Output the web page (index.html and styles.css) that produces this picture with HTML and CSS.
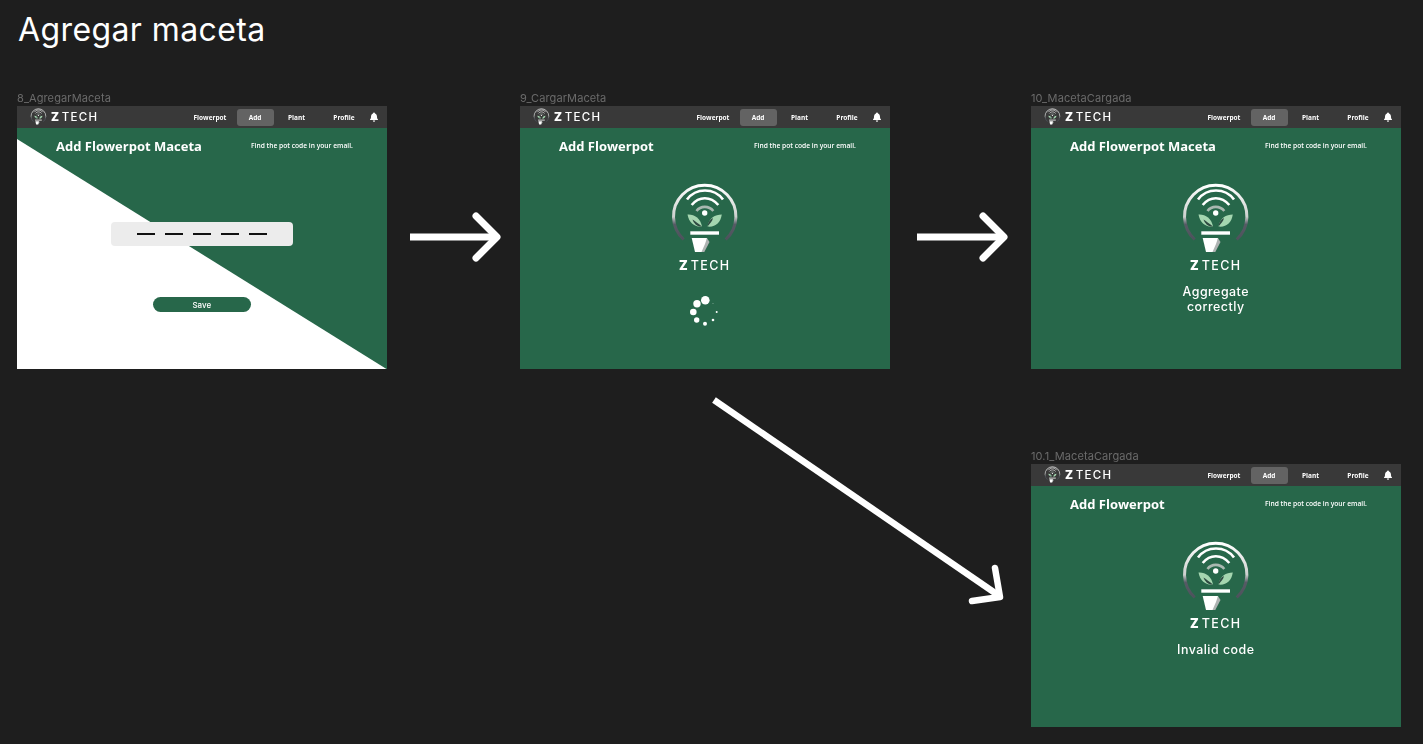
FILE: index.html
```html
<!DOCTYPE html>
<html lang="en">

<head>
    <meta charset="UTF-8">
    <meta name="viewport" content="width=device-width, initial-scale=1.0">
    <title>Agregar maceta</title>

    <link rel="stylesheet" href="styles.css">
</head>

<body>
    <!-- Shared logo mark -->
    <svg class="defs" aria-hidden="true">
        <defs>
            <linearGradient id="ring" x1="0" y1="0" x2="0" y2="1">
                <stop offset="0" stop-color="#ffffff" />
                <stop offset="0.58" stop-color="#ccd0ce" />
                <stop offset="0.72" stop-color="#565b65" />
                <stop offset="1" stop-color="#4d525c" />
            </linearGradient>
            <symbol id="mark" viewBox="0 0 72 78">
                <path d="M14.700 57.500A31.200 31.200 0 1 1 56.700 57.500" fill="none" stroke="url(#ring)" stroke-width="3" />
                <path d="M18 17.500C27 5.500 45 5.500 54 17.500" fill="none" stroke="#fff" stroke-width="2.600" />
                <path d="M22.700 23C30 14 41.500 14 49.300 23" fill="none" stroke="#fff" stroke-width="2.600" />
                <path d="M27.500 29C31.500 23.500 40 23.500 44.300 29" fill="none" stroke="#a9b8b0" stroke-width="2.600" />
                <circle cx="35.700" cy="31" r="2.700" fill="#fff" />
                <path d="M18.500 32.500C25 32 31.500 36 33 44.500C26 45.500 20 41 18.500 32.500Z" fill="#a5d6b0" />
                <path d="M23.500 37.500C26 39 29 41.500 33 44.500C28 45 25 41.500 23.500 37.500Z" fill="#2f4a42" />
                <path d="M52.800 32.500C46 32.500 40 36 38.500 44.500C46 45.500 51.500 41 52.800 32.500Z" fill="#a5d6b0" />
                <path d="M38.500 44.500C41 41.500 43.500 39 44 36C41 37.500 39 40 38.500 44.500Z" fill="#2f4a42" />
                <rect x="21.300" y="49.300" width="28.700" height="3.400" fill="#fff" />
                <path d="M38 56L40.500 60L35.300 70H31L35.500 60Z" fill="#aeb3b2" />
                <path d="M22.700 56H38L36 62L32.500 70H26Z" fill="#fff" />
            </symbol>
        </defs>
    </svg>

    <h1 class="page-title">Agregar maceta</h1>

    <!-- Arrows between the frames -->
    <svg class="arrows" width="1423" height="744" viewBox="0 0 1423 744" aria-hidden="true">
        <g fill="none" stroke="#fff" stroke-linecap="round" stroke-linejoin="round">
            <path d="M410 237H496" stroke-width="7" stroke-linecap="butt" />
            <path d="M476 216L497 237L476 258" stroke-width="7" />
            <path d="M917 237H1003" stroke-width="7" stroke-linecap="butt" />
            <path d="M983 216L1004 237L983 258" stroke-width="7" />
            <path d="M714 400L998 595" stroke-width="6.500" stroke-linecap="butt" />
            <path d="M995 568L1000 597L972 601" stroke-width="6.500" />
        </g>
    </svg>

    <!-- 8_AgregarMaceta -->
    <section class="frame frame-add">
        <p class="frame-label">8_AgregarMaceta</p>
        <nav class="nav">
            <span class="logo"><svg class="logo-mark"><use href="#mark" /></svg><span class="brand"><b>Z</b>TECH</span></span>
            <div class="nav-links">
                <a>Flowerpot</a>
                <a class="active">Add</a>
                <a>Plant</a>
                <a>Profile</a>
                <svg class="bell" viewBox="0 0 10 10"><path d="M5 .6a1 1 0 0 1 1 .9C7.400 2 8 3.200 8 4.700c0 1.400.4 2.200 1 2.800v.6H1v-.6c.6-.6 1-1.400 1-2.800C2 3.200 2.600 2 4 1.500a1 1 0 0 1 1-.9ZM3.800 8.600h2.400a1.200 1.200 0 0 1-2.400 0Z" fill="#fff" /></svg>
            </div>
        </nav>
        <div class="frame-body with-wedge">
            <div class="head">
                <h2>Add Flowerpot Maceta</h2>
                <p>Find the pot code in your email.</p>
            </div>
            <div class="code-input">
                <span></span><span></span><span></span><span></span><span></span>
            </div>
            <button class="save">Save</button>
        </div>
    </section>

    <!-- 9_CargarMaceta -->
    <section class="frame frame-load">
        <p class="frame-label">9_CargarMaceta</p>
        <nav class="nav">
            <span class="logo"><svg class="logo-mark"><use href="#mark" /></svg><span class="brand"><b>Z</b>TECH</span></span>
            <div class="nav-links">
                <a>Flowerpot</a>
                <a class="active">Add</a>
                <a>Plant</a>
                <a>Profile</a>
                <svg class="bell" viewBox="0 0 10 10"><path d="M5 .6a1 1 0 0 1 1 .9C7.400 2 8 3.200 8 4.700c0 1.400.4 2.200 1 2.800v.6H1v-.6c.6-.6 1-1.400 1-2.800C2 3.200 2.600 2 4 1.500a1 1 0 0 1 1-.9ZM3.800 8.600h2.400a1.200 1.200 0 0 1-2.400 0Z" fill="#fff" /></svg>
            </div>
        </nav>
        <div class="frame-body">
            <div class="head">
                <h2>Add Flowerpot</h2>
                <p>Find the pot code in your email.</p>
            </div>
            <svg class="big-mark"><use href="#mark" /></svg>
            <span class="brand brand-big"><b>Z</b>TECH</span>
            <svg class="spinner" viewBox="0 0 36 36" aria-hidden="true">
                <g fill="#fff">
                    <circle cx="18.300" cy="6.300" r="4.300" />
                    <circle cx="10" cy="9.700" r="3.700" />
                    <circle cx="6.300" cy="18" r="3.300" />
                    <circle cx="9.700" cy="26" r="2.700" />
                    <circle cx="18" cy="29.700" r="2" />
                    <circle cx="26" cy="26" r="1.300" />
                    <circle cx="29.700" cy="18" r="1" />
                    <circle cx="26" cy="9.700" r=".4" />
                </g>
            </svg>
        </div>
    </section>

    <!-- 10_MacetaCargada -->
    <section class="frame frame-done">
        <p class="frame-label">10_MacetaCargada</p>
        <nav class="nav">
            <span class="logo"><svg class="logo-mark"><use href="#mark" /></svg><span class="brand"><b>Z</b>TECH</span></span>
            <div class="nav-links">
                <a>Flowerpot</a>
                <a class="active">Add</a>
                <a>Plant</a>
                <a>Profile</a>
                <svg class="bell" viewBox="0 0 10 10"><path d="M5 .6a1 1 0 0 1 1 .9C7.400 2 8 3.200 8 4.700c0 1.400.4 2.200 1 2.800v.6H1v-.6c.6-.6 1-1.400 1-2.800C2 3.200 2.600 2 4 1.500a1 1 0 0 1 1-.9ZM3.800 8.600h2.400a1.200 1.200 0 0 1-2.400 0Z" fill="#fff" /></svg>
            </div>
        </nav>
        <div class="frame-body">
            <div class="head">
                <h2>Add Flowerpot Maceta</h2>
                <p>Find the pot code in your email.</p>
            </div>
            <svg class="big-mark"><use href="#mark" /></svg>
            <span class="brand brand-big"><b>Z</b>TECH</span>
            <p class="result">Aggregate<br>correctly</p>
        </div>
    </section>

    <!-- 10.1_MacetaCargada -->
    <section class="frame frame-error">
        <p class="frame-label">10.1_MacetaCargada</p>
        <nav class="nav">
            <span class="logo"><svg class="logo-mark"><use href="#mark" /></svg><span class="brand"><b>Z</b>TECH</span></span>
            <div class="nav-links">
                <a>Flowerpot</a>
                <a class="active">Add</a>
                <a>Plant</a>
                <a>Profile</a>
                <svg class="bell" viewBox="0 0 10 10"><path d="M5 .6a1 1 0 0 1 1 .9C7.400 2 8 3.200 8 4.700c0 1.400.4 2.200 1 2.800v.6H1v-.6c.6-.6 1-1.400 1-2.800C2 3.200 2.600 2 4 1.500a1 1 0 0 1 1-.9ZM3.800 8.600h2.400a1.200 1.200 0 0 1-2.400 0Z" fill="#fff" /></svg>
            </div>
        </nav>
        <div class="frame-body">
            <div class="head">
                <h2>Add Flowerpot</h2>
                <p>Find the pot code in your email.</p>
            </div>
            <svg class="big-mark"><use href="#mark" /></svg>
            <span class="brand brand-big"><b>Z</b>TECH</span>
            <p class="result">Invalid code</p>
        </div>
    </section>
</body>

</html>
```

FILE: styles.css
```css
body {
    margin: 0;
    width: 1423px;
    height: 744px;
    overflow: hidden;
    position: relative;
    background-color: #1e1e1e;
    font-family: "Inter", sans-serif;
    color: #fff;
}

.defs {
    position: absolute;
    width: 0;
    height: 0;
}

.page-title {
    margin: 0;
    padding: 10px 0 0 18px;
    font-size: 32px;
    line-height: 39px;
    font-weight: 400;
    letter-spacing: 0.4px;
}

.arrows {
    position: absolute;
    left: 0;
    top: 0;
}

/* Frames sit on a free canvas, like in the design tool */
.frame {
    position: absolute;
    width: 369.5px;
    will-change: transform;
}

.frame-add {
    left: 17px;
    top: 90px;
}

.frame-load {
    left: 520px;
    top: 90px;
}

.frame-done {
    left: 1031px;
    top: 90px;
}

.frame-error {
    left: 1031px;
    top: 448px;
}

.frame-label {
    margin: 0;
    height: 16px;
    font-size: 11px;
    line-height: 16px;
    letter-spacing: 0.1px;
    color: #6b6b6b;
}

.nav {
    display: flex;
    justify-content: space-between;
    align-items: center;
    height: 22px;
    padding: 0 8px 0 13px;
    background-color: #393939;
}

.logo {
    display: flex;
    align-items: center;
    gap: 4px;
}

.logo-mark {
    width: 17px;
    height: 18.5px;
}

.brand {
    font-size: 11.5px;
    line-height: 15px;
    font-weight: 500;
    letter-spacing: 1.3px;
}

.brand b {
    font-weight: 900;
    margin-right: 1.5px;
}

.nav-links {
    display: grid;
    grid-template-columns: 53px 37px 46px 49px 10px;
    align-items: center;
    font-family: "Open Sans", sans-serif;
    font-size: 6.5px;
    font-weight: 700;
    text-align: center;
}

.nav-links a {
    line-height: 17px;
}

.nav-links .active {
    background-color: #636363;
    border-radius: 3px;
}

.bell {
    width: 10px;
    height: 10px;
}

.frame-body {
    display: flex;
    flex-direction: column;
    align-items: center;
    position: relative;
    height: 241px;
    background-color: #27674a;
}

.with-wedge::before {
    content: "";
    position: absolute;
    inset: 0;
    background: #fff;
    clip-path: polygon(0 11px, 100% 100%, 0 100%);
}

.head {
    display: flex;
    position: relative;
    align-self: stretch;
    height: 36px;
    padding: 11px 0 0 39px;
    box-sizing: border-box;
}

.head h2 {
    margin: 0;
    width: 195px;
    flex-shrink: 0;
    font-family: "Open Sans", sans-serif;
    font-size: 13px;
    line-height: 15px;
    font-weight: 700;
}

.head p {
    margin: 0;
    font-family: "Open Sans", sans-serif;
    font-size: 6.7px;
    line-height: 13px;
    font-weight: 600;
}

.code-input {
    display: flex;
    justify-content: center;
    align-items: center;
    gap: 10px;
    position: relative;
    width: 182px;
    height: 24px;
    margin-top: 58px;
    background-color: #ececec;
    border-radius: 4px;
}

.code-input span {
    width: 18px;
    height: 2px;
    background-color: #111;
}

.save {
    position: relative;
    width: 98px;
    height: 15px;
    margin-top: 51px;
    padding: 0;
    border: none;
    border-radius: 8px;
    background-color: #27674a;
    color: #fff;
    font-family: "Inter", sans-serif;
    font-size: 8px;
    font-weight: 500;
}

.big-mark {
    width: 72px;
    height: 78px;
    margin-top: 18px;
}

.brand-big {
    margin-top: -2.5px;
    font-size: 12.5px;
    line-height: 16px;
    letter-spacing: 1.4px;
}

.spinner {
    width: 36px;
    height: 36px;
    margin-top: 20.5px;
}

.result {
    margin: 10.5px 0 0;
    font-size: 12.4px;
    line-height: 15px;
    font-weight: 500;
    letter-spacing: 0.5px;
    text-align: center;
}
```
